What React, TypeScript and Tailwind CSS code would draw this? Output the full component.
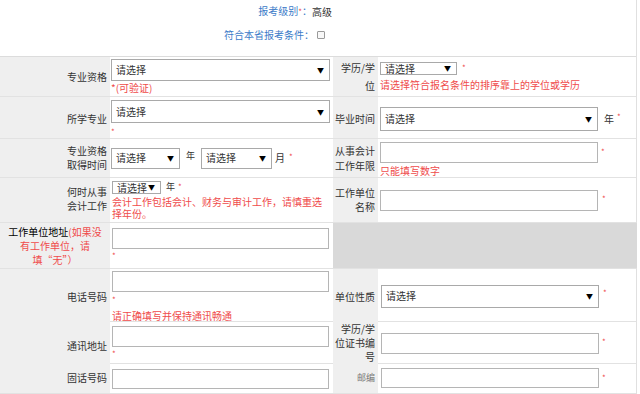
import React from "react";

const red = "text-[#ef4b4b]";

function Select({ className = "" }: { className?: string }) {
  return (
    <div
      className={`flex shrink-0 items-center justify-between border border-[#a9a9a9] bg-white pl-[4px] pr-[5px] ${className}`}
    >
      <span>请选择</span>
      <span className="text-[7px] text-black">▼</span>
    </div>
  );
}

function Input({ className = "" }: { className?: string }) {
  return <div className={`shrink-0 border border-[#b5b5b5] bg-white ${className}`} />;
}

function Star({ className = "" }: { className?: string }) {
  return <span className={`${red} text-[8px] leading-[8px] ${className}`}>*</span>;
}

function Label({ children, className = "" }: { children: React.ReactNode; className?: string }) {
  return (
    <div className={`flex items-center justify-end bg-[#efefef] pr-[3px] text-right text-[#333] ${className}`}>
      {children}
    </div>
  );
}

export default function App() {
  return (
    <div className="w-[637px] border-r border-[#e0e0e0] bg-white font-['Noto_Sans_CJK_SC',sans-serif] text-[10px] leading-[12px] text-[#333]">
      {/* header */}
      <div className="flex h-[57px] flex-col border-b border-[#dcdcdc] pt-[3px]">
        <div className="flex h-[17px] items-center">
          <div className="w-[312px] text-right text-[#3b7bc8]">
            报考级别<span className={`${red} text-[8px]`}>*</span>：
          </div>
          <span className="text-[#333]">高级</span>
        </div>
        <div className="mt-[6px] flex h-[17px] items-center">
          <div className="w-[314px] text-right text-[#3b7bc8]">符合本省报考条件：</div>
          <div className="ml-[3px] h-[8px] w-[8px] rounded-[1px] border border-[#9a9a9a] bg-[#f8f8f8]" />
        </div>
      </div>

      {/* 专业资格 */}
      <div className="grid h-[40px] grid-cols-[110px_223px_45px_259px] border-b border-[#e2e2e2]">
        <Label>专业资格</Label>
        <div className="flex flex-col justify-center pl-[1px]">
          <Select className="h-[22px] w-[219px]" />
          <div className={`${red} mt-[1px] leading-[12px]`}>*(可验证)</div>
        </div>
        <Label className="leading-[18px]">
          <span>
            学历/学
            <br />位
          </span>
        </Label>
        <div className="flex flex-col justify-center pl-[2px]">
          <div className="flex items-start">
            <Select className="h-[13px] w-[77px] leading-[11px]" />
            <Star className="ml-[5px] mt-[2px]" />
          </div>
          <div className={`${red} mt-[4px] leading-[12px]`}>请选择符合报名条件的排序靠上的学位或学历</div>
        </div>
      </div>

      {/* 所学专业 */}
      <div className="grid h-[42px] grid-cols-[110px_223px_45px_259px] border-b border-[#e2e2e2]">
        <Label className="pt-[2px]">所学专业</Label>
        <div className="flex flex-col pl-[1px] pt-[3px]">
          <Select className="h-[23px] w-[219px]" />
          <Star className="mt-[5px]" />
        </div>
        <Label className="pt-[2px]">毕业时间</Label>
        <div className="flex items-center pl-[2px] pt-[2px]">
          <Select className="h-[24px] w-[218px]" />
          <span className="ml-[6px]">年</span>
          <Star className="ml-[3px] -mt-[4px]" />
        </div>
      </div>

      {/* 专业资格取得时间 */}
      <div className="grid h-[39px] grid-cols-[110px_223px_45px_259px] border-b border-[#e2e2e2]">
        <Label className="leading-[14px]">
          <span>
            专业资格
            <br />
            取得时间
          </span>
        </Label>
        <div className="flex items-center pl-[1px]">
          <Select className="h-[21px] w-[69px]" />
          <span className="mx-[6px] -mt-[4px] text-[9px]">年</span>
          <Select className="h-[21px] w-[71px]" />
          <span className="ml-[3px]">月</span>
          <Star className="ml-[4px] -mt-[3px]" />
        </div>
        <Label className="leading-[15px]">
          <span>
            从事会计
            <br />
            工作年限
          </span>
        </Label>
        <div className="flex flex-col justify-center pl-[2px] pt-[2px]">
          <div className="flex items-start">
            <Input className="h-[21px] w-[218px]" />
            <Star className="ml-[3px] mt-[6px]" />
          </div>
          <div className={`${red} mt-[2px] leading-[12px]`}>只能填写数字</div>
        </div>
      </div>

      {/* 何时从事会计工作 */}
      <div className="grid h-[45px] grid-cols-[110px_223px_45px_259px] border-b border-[#e2e2e2]">
        <Label className="bg-[#e9ecef] pb-[3px] leading-[14px]">
          <span>
            何时从事
            <br />
            会计工作
          </span>
        </Label>
        <div className="flex flex-col pl-[2px] pt-[3px]">
          <div className="flex items-start">
            <Select className="h-[13px] w-[49px] pr-[3px] leading-[11px]" />
            <span className="ml-[5px] text-[9px] leading-[11px]">年</span>
            <Star className="ml-[3px] mt-[2px]" />
          </div>
          <div className={`${red} mt-[2px] w-[216px] leading-[12px]`}>
            会计工作包括会计、财务与审计工作，请慎重选择年份。
          </div>
        </div>
        <Label className="leading-[14px]">
          <span>
            工作单位
            <br />
            名称
          </span>
        </Label>
        <div className="flex items-center pl-[2px] pt-[1px]">
          <Input className="h-[21px] w-[218px]" />
          <Star className="ml-[4px] -mt-[3px]" />
        </div>
      </div>

      {/* 工作单位地址 */}
      <div className="grid h-[46px] grid-cols-[110px_223px_304px] border-b border-[#e2e2e2]">
        <div className="flex flex-col items-center justify-center bg-[#efefef] pt-[1px] text-center leading-[14px]">
          <div className="whitespace-nowrap">
            <span className="text-black">工作单位地址</span>
            <span className={red}>(如果没</span>
          </div>
          <div className={red}>有工作单位，请</div>
          <div className={red}>填“无”）</div>
        </div>
        <div className="flex flex-col pl-[2px] pt-[5px]">
          <Input className="h-[21px] w-[217px]" />
          <Star className="mt-[3px]" />
        </div>
        <div className="bg-[#d9d9d9]" />
      </div>

      {/* 电话号码 */}
      <div className="grid h-[53px] grid-cols-[110px_223px_45px_259px] border-b border-[#e2e2e2]">
        <Label className="pt-[3px]">电话号码</Label>
        <div className="flex flex-col pl-[2px] pt-[2px]">
          <Input className="h-[21px] w-[217px]" />
          <Star className="mt-[4px]" />
          <div className={`${red} mt-[6px] leading-[12px]`}>请正确填写并保持通讯畅通</div>
        </div>
        <Label className="pt-[2px]">单位性质</Label>
        <div className="flex items-center pl-[3px] pt-[1px]">
          <Select className="h-[23px] w-[218px]" />
          <Star className="ml-[4px] -mt-[6px]" />
        </div>
      </div>

      {/* 通讯地址 */}
      <div className="grid h-[42px] grid-cols-[110px_223px_45px_259px] border-b border-[#e2e2e2]">
        <Label className="pt-[6px]">通讯地址</Label>
        <div className="flex flex-col pl-[2px] pt-[4px]">
          <Input className="h-[21px] w-[217px]" />
          <Star className="mt-[3px]" />
        </div>
        <Label className="leading-[14px]">
          <span>
            学历/学
            <br />
            位证书编
            <br />号
          </span>
        </Label>
        <div className="flex items-center pl-[3px] pt-[1px]">
          <Input className="h-[21px] w-[218px]" />
          <Star className="ml-[3px] -mt-[3px]" />
        </div>
      </div>

      {/* 固话号码 */}
      <div className="grid h-[30px] grid-cols-[110px_223px_45px_259px] border-b border-[#e2e2e2]">
        <Label className="pb-[2px]">固话号码</Label>
        <div className="flex items-start pl-[2px] pt-[5px]">
          <Input className="h-[20px] w-[217px]" />
        </div>
        <Label className="pb-[2px] text-[9px] text-[#777]">邮编</Label>
        <div className="flex items-start pl-[3px] pt-[4px]">
          <Input className="h-[20px] w-[218px]" />
          <Star className="ml-[3px] mt-[6px]" />
        </div>
      </div>
    </div>
  );
}
